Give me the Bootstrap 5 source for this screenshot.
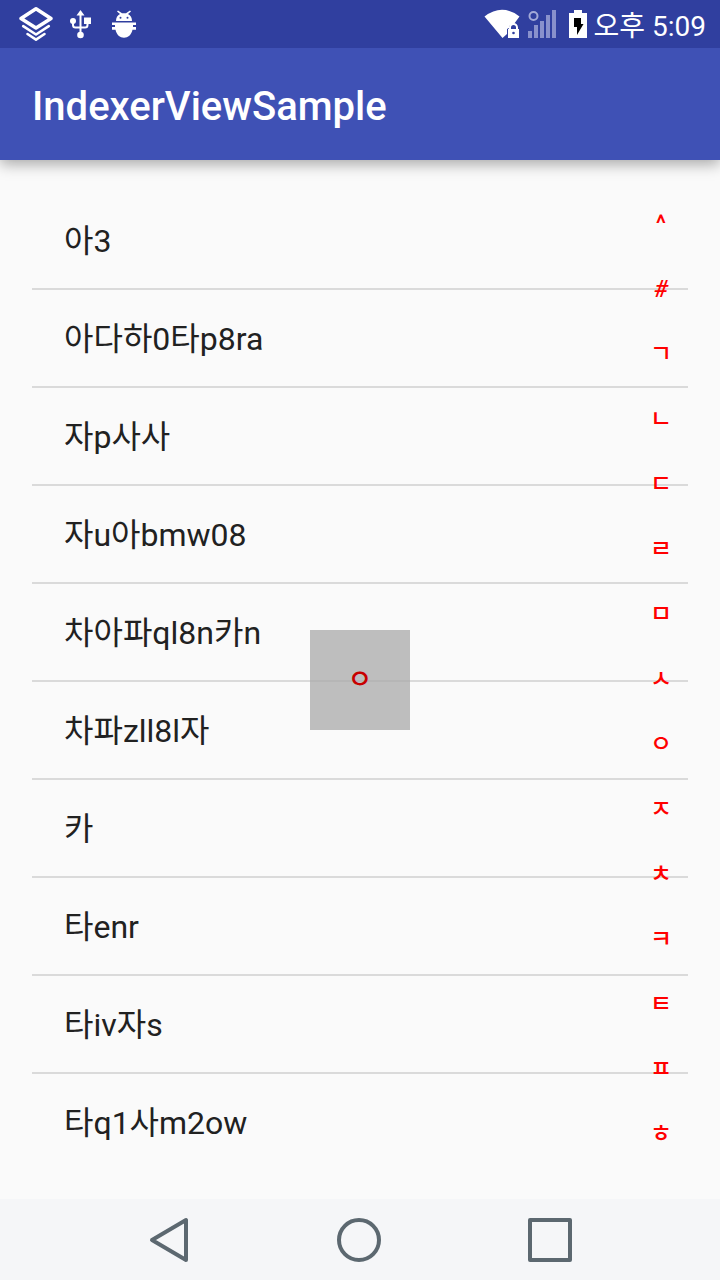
<!DOCTYPE html>
<html lang="ko">
<head>
<meta charset="utf-8">
<meta name="viewport" content="width=device-width, initial-scale=1">
<title>IndexerViewSample</title>
<link href="https://cdn.jsdelivr.net/npm/bootstrap@5.3.0/dist/css/bootstrap.min.css" rel="stylesheet">
<style>
  body { background: #fafafa; color: #212121; font-family: Roboto, "Noto Sans CJK KR", sans-serif; }
  .status-bar { background: #303f9f; height: 48px; padding: 0 14px 0 18px; z-index: 3; }
  .status-time { font-size: 28px; line-height: 42px; margin-left: 6px; padding-top: 6px; }
  .app-bar { background: #3f51b5; height: 112px; padding: 6px 32px 0; box-shadow: 0 4px 14px rgba(0, 0, 0, .34); z-index: 2; }
  .app-title { font-size: 40px; line-height: 48px; font-weight: 500; }
  .content { padding: 32px 32px 28px; }
  .names .list-group-item { background: transparent; color: inherit; border: 0; border-bottom: 2px solid #dadada; padding: 0 32px; height: 98px; font-size: 32px; line-height: 98px; }
  .names .list-group-item:last-child { border-bottom: 0; height: 97px; }
  .indexer { top: 31px; bottom: 33px; right: 32px; width: 54px; }
  .indexer a { flex: 1 1 0; color: #f00; font-size: 24px; line-height: 32px; font-weight: 500; }
  .index-preview { width: 100px; height: 100px; background: rgba(170, 170, 170, .75); color: #c80000; font-size: 27px; line-height: 32px; font-weight: 500; }
  .nav-keys { background: #f5f6f8; height: 81px; padding: 0 75px; }
  .nav-keys button { flex: 1 1 0; padding: 0; line-height: 0; }
  .nav-keys svg { fill: none; stroke: #5c6870; stroke-width: 4; stroke-linejoin: round; }
</style>
</head>
<body class="d-flex flex-column min-vh-100">
<div class="status-bar position-relative d-flex align-items-center justify-content-between text-white">
  <div class="d-flex align-items-center">
    <svg width="120" height="48" viewBox="18 0 120 48" fill="none" stroke="#fff" aria-hidden="true">
      <path d="M36 8.800L51 18.500 36 28 21 18.500Z" stroke-width="3.600" stroke-linejoin="round"/>
      <path d="M23.200 26.200L36 34.500l12.800-8.300M27.500 34L36 39.700l8.500-5.700" stroke-width="2.600" stroke-linecap="round" stroke-linejoin="round"/>
      <path d="M80.500 13v22M73 21v4q0 2.500 2.500 2.500h9.500q2.500 0 2.500-2.500v-4" stroke-width="2"/>
      <g fill="#fff" stroke="none">
        <path d="M80.500 10l4 5.500h-8zM84 17.500h7V24h-7z"/><circle cx="73" cy="21" r="3"/><circle cx="80.500" cy="35" r="3.300"/>
        <path d="M116 21q0-5 4-7l-3-2.500 1-1 4 2.700h4l4-2.700 1 1-3 2.500q4 2 4 7z"/>
        <path d="M112 22.500h24V25h-3v2h3v2.700h-3.500c-1 5-4.500 8-8.500 8s-7.500-3-8.500-8H112V27h3v-2h-3z"/>
      </g>
      <g fill="#303f9f" stroke="none"><circle cx="120.500" cy="17.800" r="1"/><circle cx="127.500" cy="17.800" r="1"/></g>
    </svg>
  </div>
  <div class="d-flex align-items-center">
    <svg width="104" height="48" viewBox="484 0 104 48" aria-hidden="true">
      <path d="M484.500 16.500Q502 3 519.500 16.500L514 24q-5 0-5 4l-2 1v5l-4.500 4z" fill="#fff"/>
      <path d="M508 29h11v9h-11z" fill="#fff"/><path d="M510 29v-1.500a3.500 3.500 0 0 1 7 0V29" fill="none" stroke="#fff" stroke-width="2"/><circle cx="513.500" cy="33" r="1.300" fill="#303f9f"/>
      <path d="M528 31h4v7h-4zM534 25h4v13h-4zM540 21h4v17h-4zM546 15h4v23h-4zM552 10h4v28h-4z" fill="#8991cc"/>
      <circle cx="533.500" cy="16" r="4" fill="none" stroke="#a2a9d8" stroke-width="2"/>
      <path d="M569 13h5v-3h8v3h5v25h-18z" fill="#fff"/><path d="M574 18h7v6h2.500L577 35v-8h-3z" fill="#000"/>
    </svg>
    <time class="status-time" datetime="17:09">오후 5:09</time>
  </div>
</div>
<header class="app-bar d-flex align-items-center position-relative text-white">
  <h1 class="app-title m-0">IndexerViewSample</h1>
</header>
<main class="content position-relative flex-grow-1">
  <ul class="names list-group list-group-flush">
    <li class="list-group-item">아3</li>
    <li class="list-group-item">아다하0타p8ra</li>
    <li class="list-group-item">자p사사</li>
    <li class="list-group-item">자u아bmw08</li>
    <li class="list-group-item">차아파ql8n카n</li>
    <li class="list-group-item">차파zll8l자</li>
    <li class="list-group-item">카</li>
    <li class="list-group-item">타enr</li>
    <li class="list-group-item">타iv자s</li>
    <li class="list-group-item">타q1사m2ow</li>
  </ul>
  <nav class="indexer position-absolute d-flex flex-column" aria-label="색인">
    <a class="d-flex align-items-center justify-content-center text-decoration-none" href="#">^</a>
    <a class="d-flex align-items-center justify-content-center text-decoration-none fst-italic" href="#">#</a>
    <a class="d-flex align-items-center justify-content-center text-decoration-none" href="#">ㄱ</a>
    <a class="d-flex align-items-center justify-content-center text-decoration-none" href="#">ㄴ</a>
    <a class="d-flex align-items-center justify-content-center text-decoration-none" href="#">ㄷ</a>
    <a class="d-flex align-items-center justify-content-center text-decoration-none" href="#">ㄹ</a>
    <a class="d-flex align-items-center justify-content-center text-decoration-none" href="#">ㅁ</a>
    <a class="d-flex align-items-center justify-content-center text-decoration-none" href="#">ㅅ</a>
    <a class="d-flex align-items-center justify-content-center text-decoration-none" href="#">ㅇ</a>
    <a class="d-flex align-items-center justify-content-center text-decoration-none" href="#">ㅈ</a>
    <a class="d-flex align-items-center justify-content-center text-decoration-none" href="#">ㅊ</a>
    <a class="d-flex align-items-center justify-content-center text-decoration-none" href="#">ㅋ</a>
    <a class="d-flex align-items-center justify-content-center text-decoration-none" href="#">ㅌ</a>
    <a class="d-flex align-items-center justify-content-center text-decoration-none" href="#">ㅍ</a>
    <a class="d-flex align-items-center justify-content-center text-decoration-none" href="#">ㅎ</a>
  </nav>
  <div class="index-preview position-absolute top-50 start-50 translate-middle d-flex align-items-center justify-content-center">ㅇ</div>
</main>
<footer class="nav-keys d-flex align-items-center">
  <button class="btn border-0" type="button" aria-label="뒤로"><svg width="48" height="48" viewBox="0 0 48 48"><path d="M6 24L40 4v40z"/></svg></button>
  <button class="btn border-0" type="button" aria-label="홈"><svg width="48" height="48" viewBox="0 0 48 48"><circle cx="23" cy="24" r="20"/></svg></button>
  <button class="btn border-0" type="button" aria-label="최근 앱"><svg width="48" height="48" viewBox="0 0 48 48"><path d="M4 4h40v40H4z"/></svg></button>
</footer>
<script src="https://cdn.jsdelivr.net/npm/bootstrap@5.3.0/dist/js/bootstrap.bundle.min.js"></script>
</body>
</html>
